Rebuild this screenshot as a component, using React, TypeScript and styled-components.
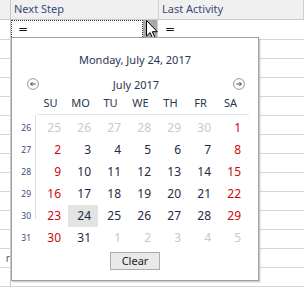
import React from "react";
import styled, { createGlobalStyle } from "styled-components";

const Global = createGlobalStyle`
  html, body { margin: 0; padding: 0; background: #ffffff; overflow: hidden; }
  body { font-family: "Noto Sans", "Open Sans", sans-serif; }
  * { box-sizing: border-box; }
`;

const Page = styled.div`
  position: relative;
  width: 304px;
  height: 290px;
  overflow: hidden;
  background: #fff;
`;

const HeaderRow = styled.div`
  display: flex;
  height: 20px;
  background: #f0f0f0;
  border-bottom: 1px solid #c8c8c8;
`;

const Stub = styled.div`
  width: 11px;
  flex: none;
  border-right: 1px solid #c8c8c8;
  font-size: 10px;
  color: #4a5a8a;
  overflow: hidden;
  white-space: nowrap;
  display: flex;
  align-items: center;
  justify-content: flex-end;
`;

const HeaderCell = styled.div<{ $w?: number }>`
  ${(p) => (p.$w ? `width: ${p.$w}px; flex: none;` : "flex: 1;")}
  border-right: 1px solid #d0d0d0;
  padding-left: 3px;
  font-size: 11px;
  line-height: 18px;
  color: #3b4a78;
  white-space: nowrap;
`;

const FilterRowBox = styled.div`
  display: flex;
  height: 20px;
  border-bottom: 1px solid #d6d6d6;
`;

const FilterCell = styled.div<{ $w?: number; $focus?: boolean }>`
  ${(p) => (p.$w ? `width: ${p.$w}px; flex: none;` : "flex: 1;")}
  border: 1px ${(p) => (p.$focus ? "dotted #333" : "solid transparent")};
  padding-left: 6px;
  font-size: 12px;
  line-height: 16px;
  color: #111;
  font-family: "DejaVu Sans", sans-serif;
`;

const DropButton = styled.div`
  width: 15px;
  flex: none;
  background: #a8a8a8;
  border-right: 1px solid #d0d0d0;
`;

const BodyRow = styled.div`
  display: flex;
  height: 19px;
  border-bottom: 1px solid #d6d6d6;
`;

const Cursor = styled.svg`
  position: absolute;
  left: 146px;
  top: 20px;
`;

const Popup = styled.div`
  position: absolute;
  left: 11px;
  top: 37px;
  width: 248px;
  height: 244px;
  background: #fff;
  border: 1px solid #a0a0a0;
  box-shadow: 1px 1px 0 #cfcfcf, 2px 2px 1px rgba(0, 0, 0, 0.08);
  display: flex;
  flex-direction: column;
  padding-top: 14px;
`;

const Title = styled.div`
  height: 16px;
  text-align: center;
  font-size: 11px;
  line-height: 16px;
  color: #2a3550;
`;

const NavRow = styled.div`
  margin-top: 8px;
  height: 16px;
  display: flex;
  align-items: center;
  justify-content: space-between;
  padding: 0 13px 0 15px;
  font-size: 11px;
  color: #2a3550;
`;

const NavBtn = styled.svg`
  display: block;
`;

const HeadRow = styled.div`
  margin-top: 2px;
  margin-left: 26px;
  width: 211px;
  height: 21px;
  display: grid;
  grid-template-columns: repeat(7, 30px);
  border-bottom: 1px solid #e2e2e2;
`;

const HeadLabel = styled.div`
  text-align: center;
  padding-right: 5px;
  font-size: 11px;
  line-height: 17px;
  color: #2a3550;
`;

const CalBody = styled.div`
  display: flex;
  padding-top: 2px;
`;

const WeekCol = styled.div`
  width: 24px;
  flex: none;
  margin-top: -2px;
  padding-top: 2px;
  background: linear-gradient(#dcdcdc, #dcdcdc) right top / 1px 104px no-repeat;
`;

const WeekNum = styled.div`
  height: 22px;
  text-align: right;
  padding-right: 5px;
  font-size: 8.5px;
  line-height: 22px;
  color: #3c4a7c;
`;

const DayGrid = styled.div`
  margin-left: 2px;
  display: grid;
  grid-template-columns: repeat(7, 30px);
  grid-auto-rows: 22px;
`;

type Kind = "normal" | "weekend" | "other";

const Day = styled.div<{ $kind: Kind; $today?: boolean }>`
  text-align: right;
  padding-right: 7px;
  font-size: 12px;
  line-height: 22px;
  background: ${(p) => (p.$today ? "#e3e3e3" : "transparent")};
  color: ${(p) =>
    p.$kind === "other" ? "#c9c9c9" : p.$kind === "weekend" ? "#cc0a0a" : "#1f2a44"};
`;

const Footer = styled.div`
  display: flex;
  justify-content: center;
  padding-top: 3px;
`;

const ClearButton = styled.button`
  width: 50px;
  height: 18px;
  padding: 0;
  border: 1px solid #adadad;
  background: #e9e9e9;
  font-family: "Noto Sans", sans-serif;
  font-size: 11px;
  line-height: 14px;
  color: #222;
`;

const ArrowIcon = ({ dir }: { dir: "left" | "right" }) => (
  <NavBtn width="12" height="12" viewBox="0 0 12 12">
    <circle cx="6" cy="6" r="5.4" fill="none" stroke="#8a8a8a" strokeWidth="0.9" />
    {dir === "left" ? (
      <path d="M8.5 6H3.6M5.6 4 3.6 6l2 2" fill="none" stroke="#333" strokeWidth="0.9" />
    ) : (
      <path d="M3.5 6h4.9M6.4 4l2 2-2 2" fill="none" stroke="#333" strokeWidth="0.9" />
    )}
  </NavBtn>
);

type Cell = { d: number; k: Kind };

const build = (): Cell[][] => {
  const rows: Cell[][] = [];
  const first: Cell[] = [25, 26, 27, 28, 29, 30].map((d) => ({ d, k: "other" as Kind }));
  first.push({ d: 1, k: "weekend" });
  rows.push(first);
  let d = 2;
  for (let r = 0; r < 4; r++) {
    const row: Cell[] = [];
    for (let c = 0; c < 7; c++) {
      row.push({ d, k: c === 0 || c === 6 ? "weekend" : "normal" });
      d++;
    }
    rows.push(row);
  }
  rows.push([
    { d: 30, k: "weekend" },
    { d: 31, k: "normal" },
    ...[1, 2, 3, 4, 5].map((x) => ({ d: x, k: "other" as Kind })),
  ]);
  return rows;
};

const weeks = [26, 27, 28, 29, 30, 31];
const labels = ["SU", "MO", "TU", "WE", "TH", "FR", "SA"];

export default function App() {
  const rows = build();
  const bodyRows = Array.from({ length: 13 });
  return (
    <Page>
      <Global />
      <HeaderRow>
        <Stub />
        <HeaderCell $w={148}>Next Step</HeaderCell>
        <HeaderCell>Last Activity</HeaderCell>
      </HeaderRow>
      <FilterRowBox>
        <Stub />
        <FilterCell $w={132} $focus>=</FilterCell>
        <DropButton />
        <FilterCell>=</FilterCell>
      </FilterRowBox>
      {bodyRows.map((_, i) => (
        <BodyRow key={i}>
          <Stub>{i === 11 ? "r" : ""}</Stub>
        </BodyRow>
      ))}
      <Cursor width="12" height="19" viewBox="0 0 12 19">
        <path
          d="M0.5 0.5v15.5l3.6-3.4 2.4 5.4 2.2-1-2.4-5.3h5z"
          fill="#fff"
          stroke="#000"
          strokeWidth="1"
          strokeLinejoin="miter"
        />
      </Cursor>
      <Popup>
        <Title>Monday, July 24, 2017</Title>
        <NavRow>
          <ArrowIcon dir="left" />
          <span>July 2017</span>
          <ArrowIcon dir="right" />
        </NavRow>
        <HeadRow>
          {labels.map((l) => (
            <HeadLabel key={l}>{l}</HeadLabel>
          ))}
        </HeadRow>
        <CalBody>
          <WeekCol>
            {weeks.map((w) => (
              <WeekNum key={w}>{w}</WeekNum>
            ))}
          </WeekCol>
          <DayGrid>
            {rows.map((row, ri) =>
              row.map((c, ci) => (
                <Day key={`${ri}-${ci}`} $kind={c.k} $today={ri === 4 && ci === 1}>
                  {c.d}
                </Day>
              ))
            )}
          </DayGrid>
        </CalBody>
        <Footer>
          <ClearButton>Clear</ClearButton>
        </Footer>
      </Popup>
    </Page>
  );
}
